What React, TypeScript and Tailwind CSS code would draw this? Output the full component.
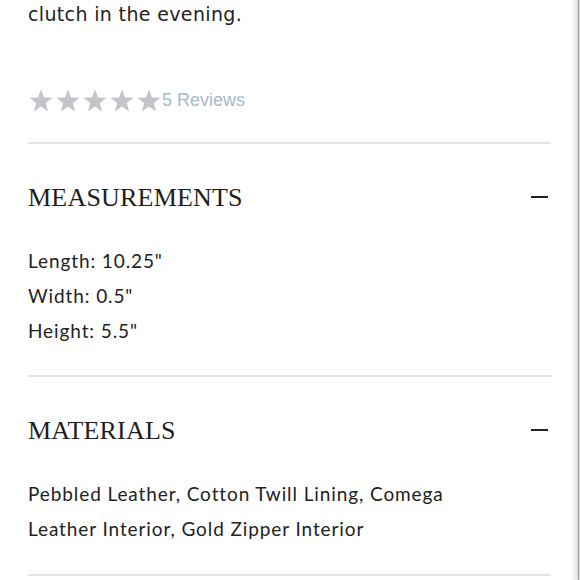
import React from 'react';

const body = { fontFamily: 'Lato, "Open Sans", sans-serif' };
const serif = { fontFamily: '"Liberation Serif", "DejaVu Serif", serif' };

const Star = () => (
  <svg width="24" height="23" viewBox="0 0 24 23" className="shrink-0">
    <polygon
      points="12,0.5 15,8.6 23.6,8.8 16.8,14.1 19.2,22.4 12,17.5 4.8,22.4 7.2,14.1 0.4,8.8 9,8.6"
      fill="#c3c4c9"
    />
  </svg>
);

const Minus = () => <div className="w-[17px] h-[2px] bg-[#222]" />;

const Section = ({ title, children }: { title: string; children: React.ReactNode }) => (
  <div className="border-t-2 border-[#e4e4e4]">
    <div className="flex items-center justify-between h-[110px] pb-[4px] pr-[3px]">
      <h2 className="text-[26px] text-[#1e1e1e] tracking-[0.2px]" style={serif}>
        {title}
      </h2>
      <Minus />
    </div>
    {children}
  </div>
);

export default function App() {
  return (
    <div className="flex w-[580px] h-[580px] overflow-hidden bg-white">
      <div className="flex-1 pl-[28px] pr-[19px] text-[#222]" style={body}>
        <p
          className="text-[19px] leading-[35px] tracking-[0.35px] -mt-[3px]"
          style={{ fontFamily: '"DejaVu Sans", Verdana, sans-serif' }}
        >
          clutch in the evening.
        </p>

        {/* rating */}
        <div className="flex items-center h-[60px] mt-[38px] mb-[12px] pl-[1px]">
          <div className="flex gap-[3px]">
            <Star />
            <Star />
            <Star />
            <Star />
            <Star />
          </div>
          <span
            className="ml-[1px] text-[18px] text-[#a9b8cf]"
            style={{ fontFamily: '"Liberation Sans", Arial, sans-serif' }}
          >
            5 Reviews
          </span>
        </div>

        <Section title="MEASUREMENTS">
          <div className="text-[19px] leading-[35px] tracking-[0.9px] -mt-[11px] pb-[27px]">
            <p>Length: 10.25"</p>
            <p>Width: 0.5"</p>
            <p>Height: 5.5"</p>
          </div>
        </Section>

        <Section title="MATERIALS">
          <div className="text-[19px] leading-[35px] tracking-[0.9px] -mt-[11px] pb-[28px]">
            <p>
              Pebbled Leather, Cotton Twill Lining, Comega
              <br />
              Leather Interior, Gold Zipper Interior
            </p>
          </div>
        </Section>
        <div className="border-t-2 border-[#e4e4e4]" />
      </div>

      {/* right edge shade */}
      <div className="w-[8px] h-full bg-gradient-to-r from-white to-[#e2e2e2]" />
      <div className="w-[1px] h-full bg-[#9a9a9a]" />
      <div className="w-[1px] h-full bg-[#dcdcdc]" />
    </div>
  );
}
